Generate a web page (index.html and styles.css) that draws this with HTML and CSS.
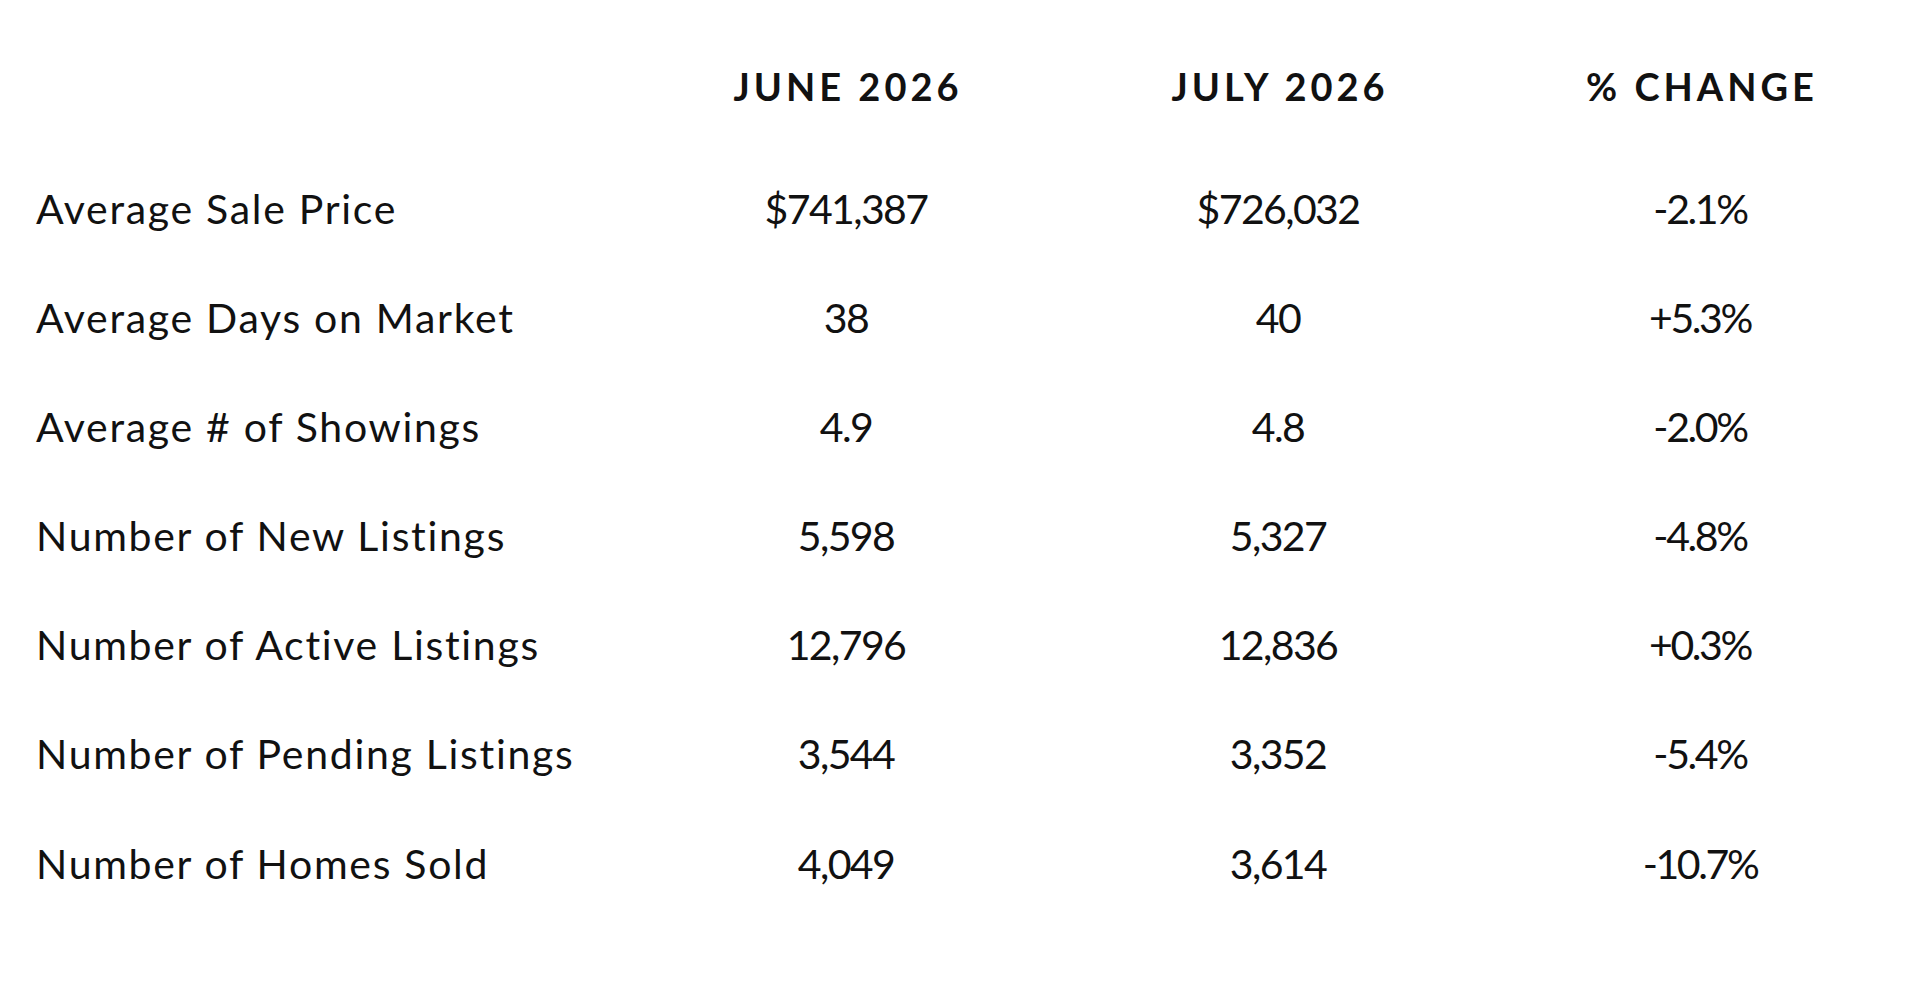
FILE: index.html
```html
<!DOCTYPE html>
<html lang="en">
<head>
<meta charset="utf-8">
<title>Market Stats</title>
<link rel="stylesheet" href="styles.css">
</head>
<body>
<main class="stats">
  <div class="row head">
    <div class="label"></div>
    <div class="cell">JUNE 2026</div>
    <div class="cell">JULY 2026</div>
    <div class="cell last">% CHANGE</div>
  </div>
  <div class="row">
    <div class="label">Average Sale Price</div>
    <div class="cell">$741,387</div>
    <div class="cell">$726,032</div>
    <div class="cell last">-2.1%</div>
  </div>
  <div class="row">
    <div class="label">Average Days on Market</div>
    <div class="cell">38</div>
    <div class="cell">40</div>
    <div class="cell last">+5.3%</div>
  </div>
  <div class="row">
    <div class="label">Average # of Showings</div>
    <div class="cell">4.9</div>
    <div class="cell">4.8</div>
    <div class="cell last">-2.0%</div>
  </div>
  <div class="row">
    <div class="label">Number of New Listings</div>
    <div class="cell">5,598</div>
    <div class="cell">5,327</div>
    <div class="cell last">-4.8%</div>
  </div>
  <div class="row">
    <div class="label">Number of Active Listings</div>
    <div class="cell">12,796</div>
    <div class="cell">12,836</div>
    <div class="cell last">+0.3%</div>
  </div>
  <div class="row">
    <div class="label">Number of Pending Listings</div>
    <div class="cell">3,544</div>
    <div class="cell">3,352</div>
    <div class="cell last">-5.4%</div>
  </div>
  <div class="row">
    <div class="label">Number of Homes Sold</div>
    <div class="cell">4,049</div>
    <div class="cell">3,614</div>
    <div class="cell last">-10.7%</div>
  </div>
</main>
</body>
</html>
```
FILE: styles.css
```css
html, body {
  margin: 0;
  padding: 0;
  background: #ffffff;
}
body {
  width: 1920px;
  height: 1005px;
  overflow: hidden;
  font-family: Lato, "Noto Sans", "Liberation Sans", sans-serif;
  color: #111111;
}
.stats {
  display: flex;
  flex-direction: column;
  padding: 31px 0 0 36px;
}
.row {
  display: grid;
  grid-template-columns: 594px 432px 432px 412px;
  align-items: center;
  height: 109px;
  font-size: 41px;
  font-weight: 400;
}
.row + .row {
  margin-top: 0;
}
.row:last-child {
  margin-top: 1px;
}
.row.head {
  height: 109px;
  margin-bottom: 14px;
  font-size: 38px;
  font-weight: 700;
  letter-spacing: 4px;
}
.label {
  white-space: nowrap;
  letter-spacing: 1.7px;
}
.cell {
  text-align: center;
  white-space: nowrap;
  letter-spacing: -1.6px;
}
.cell.last {
  letter-spacing: -2.4px;
}
.head .cell,
.head .cell.last {
  letter-spacing: 4px;
  padding-left: 4px;
}
```
